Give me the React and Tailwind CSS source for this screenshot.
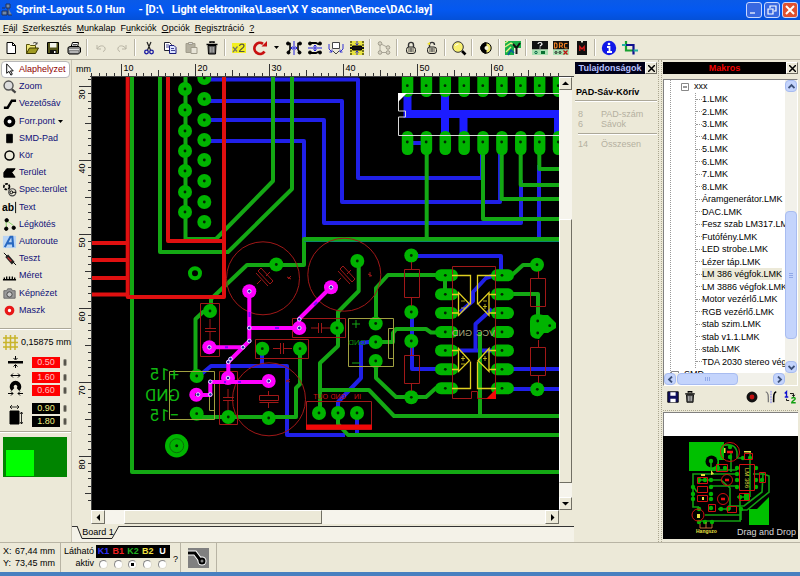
import { useEffect, useState } from 'react';
import clsx from 'clsx';

const GREEN = '#14a814';
const PAD = '#00b400';
const BLUE = '#2020e8';
const RED = '#e01010';
const PINK = '#ff00ff';
const SILK = '#a01818';
const YELLOW = '#e0d020';

/* ---------- toolbar icons ---------- */

const Svg = ({ children, size = 16 }) => (
  <svg width={size} height={size} viewBox="0 0 16 16" fill="none" stroke="#000" className="shrink-0">
    {children}
  </svg>
);

const NewIcon = () => <Svg><path d="M4 2.5h5.5l3 3v8H4z" fill="#fff" /><path d="M9.5 2.5v3h3" /></Svg>;
const OpenIcon = () => (
  <Svg>
    <path d="M2.5 13.5v-9h3l1 1h5v2.5" fill="#f0e878" stroke="#55500a" />
    <path d="M2.5 13.5l3-5.5h9l-3 5.5z" fill="#a09a20" stroke="#3c3800" />
    <path d="M9 3.5c1-1.500 3-1.500 4 .5m0-2v2.200h-2" stroke="#333" strokeWidth=".8" />
  </Svg>
);
const SaveIcon = () => (
  <Svg>
    <path d="M2.5 2.5h11v11h-11z" fill="#55551a" />
    <path d="M5 3h6.500v4.500H5z" fill="#f4f4ec" stroke="none" />
    <path d="M5 10h6.500v3.500H5z" fill="#111" stroke="none" />
    <path d="M9 11h1.500v2H9z" fill="#fff" stroke="none" />
  </Svg>
);
const PrintIcon = () => (
  <Svg>
    <path d="M5 7l1.500-4.500h6L11.500 7" fill="#fff" />
    <path d="M2 7.500l2-1h9l1.500 1.500v4l-2 2H3l-1-1.500z" fill="#888" />
    <path d="M3 9.500h10M4 12h8" stroke="#ddd" />
    <path d="M7 4.500h4M6.500 6h4" strokeWidth=".7" />
  </Svg>
);
const UndoIcon = () => <Svg><path d="M4 5v4h4M4 9c2-4 7-4 8-1 .5 2-.5 3-2 3.500" stroke="#b8b4a4" /></Svg>;
const RedoIcon = () => <Svg><path d="M12 5v4H8M12 9C10 5 5 5 4 8c-.5 2 .5 3 2 3.500" stroke="#b8b4a4" /></Svg>;
const CutIcon = () => (
  <Svg>
    <path d="M6 2l3.500 8M10 2L6.500 10" stroke="#222" strokeWidth="1.200" />
    <circle cx="5.500" cy="12" r="1.800" stroke="#1818a0" strokeWidth="1.300" />
    <circle cx="10.500" cy="12" r="1.800" stroke="#1818a0" strokeWidth="1.300" />
  </Svg>
);
const CopyIcon = () => (
  <Svg>
    <path d="M2.500 2.500h5l2 2v6h-7z" fill="#fff" stroke="#223" />
    <path d="M7.500 5.500h4.500l2 2v6H7.500z" fill="#dce4ff" stroke="#18187a" />
    <path d="M4 5h3M4 7h3M9 8.500h3M9 10.500h4" stroke="#18187a" strokeWidth=".8" />
  </Svg>
);
const PasteIcon = () => (
  <Svg>
    <path d="M3 3.500h9v9H3z" fill="#b4b0a0" stroke="#a09c8c" />
    <path d="M5.500 2.500h4v2h-4z" fill="#ddd" stroke="#a09c8c" />
    <path d="M8 7.500h6v6H8z" fill="#e8e5d8" stroke="#a09c8c" />
  </Svg>
);
const TrashIcon = ({ size }) => (
  <Svg size={size}>
    <path d="M4 5.500h8l-.5 8.500h-7z" fill="#555" />
    <path d="M2.500 4.500h11M6 3V2h4v1" strokeWidth="1.500" />
    <path d="M6.300 7v5.500M8 7v5.500M9.700 7v5.500" stroke="#ccc" strokeWidth=".8" />
  </Svg>
);
const TimesTwoIcon = () => (
  <Svg>
    <path d="M1 3h14v10H1z" fill="#f4f020" stroke="none" />
    <path d="M2 7l4 4.500M6.500 6.500L2 12" stroke="#776" strokeWidth="1.200" />
    <path d="M8.500 6c.5-2.500 4.500-2.500 4.500 0 0 2-4.500 3.500-4.500 5.500h5" stroke="#554" strokeWidth="1.200" />
  </Svg>
);
const RotateIcon = () => (
  <Svg>
    <path d="M12.500 11.500A5.500 5.500 0 1 1 11 3.800" stroke="#c81010" strokeWidth="2.800" />
    <path d="M9.500 6.500h5.500V1z" fill="#c81010" stroke="none" />
  </Svg>
);
const MirrorHIcon = () => (
  <Svg>
    <path d="M1.500 3.500h2.500v6l-1.500 3M14.500 3.500h-2.500v6l1.500 3" strokeWidth="1.600" />
    <circle cx="2" cy="3.500" r="1.500" fill="#000" /><circle cx="14" cy="3.500" r="1.500" fill="#000" />
    <circle cx="2.500" cy="12.500" r="1.500" fill="#000" /><circle cx="13.500" cy="12.500" r="1.500" fill="#000" />
    <path d="M8 1v14M5 8h6M6.500 6.500L5 8l1.500 1.500M9.500 6.500L11 8 9.500 9.500" stroke="#2020e0" />
  </Svg>
);
const MirrorVIcon = () => (
  <Svg>
    <path d="M3 3h6l3 1.500M3 13h6l3-1.500" strokeWidth="1.800" />
    <circle cx="3" cy="3.500" r="1.500" fill="#000" /><circle cx="3" cy="12.500" r="1.500" fill="#000" />
    <circle cx="13" cy="3.500" r="1.500" fill="#000" /><circle cx="13" cy="12.500" r="1.500" fill="#000" />
    <path d="M1 8h14M8 5v6M6.500 6.500L8 5l1.500 1.500M6.500 9.500L8 11l1.500-1.500" stroke="#2020e0" />
  </Svg>
);
const TurnIcon = () => (
  <Svg>
    <path d="M4.500 2.500h7v6h-7z" fill="#fff" stroke="#444" />
    <path d="M1 4v5l3 3M4 9.500V12H1.500M15 4v5l-3 3M12 9.500V12h2.500" stroke="#3030d0" />
    <path d="M5 11l3 3 3-3" stroke="#444" />
  </Svg>
);
const AlignIcon = () => (
  <Svg>
    <path d="M1 1h14v14H1z" fill="#e8e440" stroke="none" />
    <path d="M2 1v14M14 1v14" strokeDasharray="2 1" />
    <path d="M3.500 6h9v4h-9z" fill="#111" />
    <path d="M1 8h14" stroke="#111" strokeWidth="2" />
    <path d="M8 1v4M6.500 3.500L8 5l1.500-1.500M8 15v-4M6.500 12.500L8 11l1.500 1.500" stroke="#3030c0" />
  </Svg>
);
const NodesIcon = () => (
  <Svg>
    <path d="M4 3.500v9h8M4 3.500l8 4" stroke="#aaa698" />
    <circle cx="4" cy="3.500" r="1.800" fill="#d8d4c4" stroke="#a09c8c" />
    <circle cx="4" cy="12.500" r="1.800" fill="#d8d4c4" stroke="#a09c8c" />
    <circle cx="12" cy="7.500" r="1.800" fill="#d8d4c4" stroke="#a09c8c" />
    <circle cx="12" cy="12.500" r="1.800" fill="#d8d4c4" stroke="#a09c8c" />
  </Svg>
);
const LockIcon = ({ open }) => (
  <Svg>
    <path d={open ? 'M5.500 7V5c0-3.500 5-3.500 5 0' : 'M5.500 7V5c0-3.500 5-3.500 5 0v2'} stroke="#333" strokeWidth="1.400" />
    {open && <path d="M3 4l3-2v3z" fill="#f0e020" stroke="none" />}
    <rect x="3.500" y="7" width="9" height="6.500" rx="2.500" fill="#ddd8c0" stroke="#222" />
    <path d="M5 9h6M5 11h6M8 8v4" stroke="#444" strokeWidth=".8" />
  </Svg>
);
const FindIcon = () => (
  <Svg>
    <circle cx="7" cy="7" r="5.300" fill="#f8f070" stroke="#333" />
    <path d="M4.500 6a3 3 0 0 1 3-2" stroke="#fff" />
    <path d="M11 11l3.500 3.500" strokeWidth="2.600" />
  </Svg>
);
const ContrastIcon = () => (
  <Svg>
    <circle cx="8" cy="8" r="5.200" fill="#f0e870" />
    <path d="M8 2.800a5.200 5.200 0 0 0 0 10.400z" fill="#000" />
    <circle cx="8.500" cy="8" r="2" fill="#f4f4dc" stroke="none" />
  </Svg>
);
const PhotoViewIcon = () => (
  <Svg>
    <path d="M0 1h16v14H0z" fill="#18b048" stroke="none" />
    <path d="M0 7l6-4 4 3M1 12l5-5M0 3l3-2" stroke="#e8f080" strokeWidth="1.400" />
    <path d="M9 15V8h7v7z" fill="#ece9d8" stroke="none" />
    <path d="M3 15l3-5 3 3" stroke="#0a5a9a" strokeWidth="1.500" />
    <path d="M8 4l3.500 4v6M15 3l-3.500 5" stroke="#111" strokeWidth="2" />
  </Svg>
);
const BoardPanel = ({ children }) => (
  <Svg>
    <path d="M0 1h16v8.500H0z" fill="#111" stroke="none" />
    <path d="M0 9.500h16V15H0z" fill="#a8e0b0" stroke="none" />
    {children}
  </Svg>
);
const HelpBoardIcon = () => (
  <BoardPanel>
    <path d="M6 4c0-2 4-2 4 0 0 1.300-2 1.200-2 2.500M8 7.500v1" stroke="#fff" strokeWidth="1.200" />
    <circle cx="4" cy="12.500" r="1.200" stroke="#064" /><path d="M9 11h4v3H9z" fill="#087030" stroke="none" />
  </BoardPanel>
);
const DrcIcon = () => (
  <BoardPanel>
    <path d="M1.500 3v5h1.500l1-1V4L3 3zM6.500 8V3h2l1 1v1l-1 1h-2M8.500 6l1 2M14.500 3.500h-2.500l-.5 1v2.500l.5 1h2.500" stroke="#f08020" strokeWidth="1.100" />
    <circle cx="3" cy="12.500" r="1" stroke="#222" /><circle cx="7" cy="12.500" r="1" stroke="#222" />
    <path d="M10.500 10.500l4 4M14.500 10.500l-4 4" stroke="#c01010" strokeWidth="1.300" />
  </BoardPanel>
);
const MacroIcon = () => (
  <Svg>
    <path d="M3 1h4v1.500h2V1h4v14H3z" fill="#111" stroke="none" />
    <path d="M5.800 11V6.500L8 9l2.200-2.500V11" stroke="#e01818" strokeWidth="1.200" />
  </Svg>
);
const InfoIcon = () => (
  <Svg>
    <circle cx="8" cy="8" r="7.200" fill="#1018e8" stroke="none" />
    <path d="M6 7h2.500v4.500M6 12h5" stroke="#fff" strokeWidth="1.800" /><circle cx="8" cy="4" r="1.300" fill="#fff" stroke="none" />
  </Svg>
);
const CropIcon = () => (
  <Svg>
    <path d="M4 1v9.500h7.500" stroke="#18a030" strokeWidth="2.200" />
    <path d="M4 5h7.500v9.500" stroke="#101090" strokeWidth="2.200" />
    <path d="M0 5h4M11.500 10.500H16" stroke="#20b0a0" strokeWidth="2.200" />
  </Svg>
);

const TOOLBAR = [
  [['New', NewIcon], ['Open', OpenIcon], ['Save', SaveIcon], ['Print', PrintIcon]],
  [['Undo', UndoIcon], ['Redo', RedoIcon]],
  [['Cut', CutIcon], ['Copy', CopyIcon], ['Paste', PasteIcon], ['Delete', TrashIcon]],
  [['Duplicate', TimesTwoIcon], ['Rotate', RotateIcon, true], ['Mirror horizontal', MirrorHIcon], ['Mirror vertical', MirrorVIcon], ['Turn', TurnIcon], ['Align', AlignIcon]],
  [['Group', NodesIcon]],
  [['Lock', LockIcon], ['Unlock', () => <LockIcon open />]],
  [['Find', FindIcon]],
  [['Contrast', ContrastIcon]],
  [['Photo view', PhotoViewIcon]],
  [['Board help', HelpBoardIcon], ['DRC', DrcIcon], ['Macros', MacroIcon]],
  [['Info', InfoIcon], ['Crop', CropIcon]],
];

/* ---------- sidebar tools ---------- */

const TOOLS = [
  { name: 'Alaphelyzet', icon: <path d="M5 2v10l2.500-2 2 4 1.500-1-2-3.500h3z" fill="#fff" /> },
  { name: 'Zoom', icon: <><circle cx="7" cy="7" r="4.800" fill="#dcdcdc" stroke="#555" strokeWidth="1.500" /><path d="M10.500 11l4 3.500" stroke="#444" strokeWidth="2.400" /></> },
  { name: 'Vezetősáv', icon: <path d="M2 12.500h4l4.500-7.500H15" strokeWidth="2.600" /> },
  { name: 'Forr.pont', arrow: true, icon: <circle cx="8" cy="8" r="4.200" strokeWidth="4" fill="#fff" /> },
  { name: 'SMD-Pad', icon: <path d="M5 3.500h6v9H5z" fill="#000" /> },
  { name: 'Kör', icon: <circle cx="8" cy="8" r="4.800" strokeWidth="1.600" /> },
  { name: 'Terület', icon: <path d="M5 4h9l-3.500 4 3.500 5H2V8z" fill="#000" /> },
  { name: 'Spec.terület', icon: <><circle cx="5" cy="5" r="3" strokeWidth="1.800" strokeDasharray="3 1" /><circle cx="11" cy="11" r="3.800" stroke="#444" strokeWidth="1.300" /><circle cx="10" cy="11" r="1.500" /><path d="M11 11h4" /></> },
  { name: 'Text', icon: <><text x="0" y="12" fill="#000" stroke="none" className="text-[11px] font-bold">ab</text><path d="M14.500 2v12" /></> },
  { name: 'Légkötés', icon: <><path d="M4 3l1 10M4 3l8 6" stroke="#80d060" /><circle cx="5" cy="3.500" r="1.800" fill="#000" /><circle cx="4.500" cy="12.500" r="1.800" fill="#000" /><circle cx="12.500" cy="11.500" r="1.800" fill="#000" /></> },
  { name: 'Autoroute', icon: <><path d="M1 2h14v13H1z" fill="#b8d4f4" stroke="none" /><path d="M3 14l6-11h2l1 11M6 10h6" stroke="#2868c0" strokeWidth="2.200" /></> },
  { name: 'Teszt', icon: <><path d="M2 2l4 4" /><path d="M5 5l7 8" stroke="#222" strokeWidth="4" /><path d="M6 7l4 4" stroke="#c03030" strokeWidth="1.500" /><path d="M12 12l3 3" /></> },
  { name: 'Méret', icon: <path d="M1 12.500h14M2.500 12v-2m2.500 2v-3m3 3V9m3 3v-3m2.500 3v-2" strokeWidth="1.400" /> },
  { name: 'Képnézet', icon: <><path d="M2 5h3l1-2h4l1 2h3v8H2z" fill="#999" stroke="#666" /><circle cx="8" cy="9" r="2.800" fill="#ccc" stroke="#444" /></> },
  { name: 'Maszk', icon: <circle cx="8" cy="8" r="3.500" stroke="#e81818" strokeWidth="3.400" fill="#fff" /> },
];

const Separator = () => <div className="h-px bg-[#aca899] border-b border-white box-content" />;

const SizeInput = ({ label, value, dark }) => (
  <div className="flex items-center gap-[3px]">
    <input
      aria-label={label}
      defaultValue={value}
      className={clsx(
        'w-[28px] h-[11px] text-[9px] leading-[11px] text-center outline-none',
        dark ? 'bg-black text-[#f4f080]' : 'bg-[#ff0000] text-[#ffc0c0]'
      )}
    />
    <span className="w-1 h-[7px] rounded-sm bg-[#55534a] border-x border-[#a8a598]" />
  </div>
);

const Sidebar = ({ tool, setTool }) => (
  <aside className="w-[72px] shrink-0 border-r border-[#c8c4b4] pt-px">
    <div className="grid auto-rows-fr h-[258px] px-px">
      {TOOLS.map((t) => (
        <button
          key={t.name}
          onClick={() => setTool(t.name)}
          className={clsx(
            'flex items-center gap-[2px] rounded-sm border text-[9px] leading-[11px] whitespace-nowrap',
            tool === t.name ? 'bg-white border-[#b8b8b8] text-[#900000]' : 'border-transparent text-[#101078]'
          )}
        >
          <Svg size={15}>{t.icon}</Svg>
          {t.name}
          {t.arrow && <svg width="5" height="3" className="ml-px"><path d="M0 0h5L2.500 3z" /></svg>}
        </button>
      ))}
    </div>
    <div className="mt-[9px]"><Separator /></div>
    <div className="flex items-center gap-[3px] mt-1 pl-[3px] text-[9px] leading-4 whitespace-nowrap">
      <svg width="15" height="15" stroke="#c8b428" strokeWidth="1.500"><path d="M3 0v15M7.500 0v15M12 0v15M0 3h15M0 7.500h15M0 12h15" /></svg>
      0,15875 mm
    </div>
    <div className="flex items-center gap-[9px] mt-[6px] pl-2">
      <svg width="15" height="12"><path d="M0 5h15v2.500H0z" /><path d="M7.500 0v3M7.500 12V9M5.500 2l2 2 2-2M5.500 10.500l2-2 2 2" fill="none" stroke="#000" /></svg>
      <SizeInput label="Track width" value="0.50" />
    </div>
    <div className="flex items-center gap-[9px] mt-1 pl-2">
      <svg width="15" height="23" fill="none" stroke="#000">
        <path d="M3 2.500h9M5 .5l-2 2 2 2M10 .5l2 2-2 2" />
        <path d="M5 16.500A3.800 3.800 0 1 1 10 16.500" strokeWidth="4" />
        <path d="M0 20.500h5M15 20.500h-5M3 18.500l2 2-2 2M12 18.500l-2 2 2 2" />
      </svg>
      <div className="flex flex-col gap-[2px]">
        <SizeInput label="Pad outer" value="1.60" />
        <SizeInput label="Pad inner" value="0.60" />
      </div>
    </div>
    <div className="flex items-center gap-[9px] mt-[7px] mb-1 pl-2">
      <svg width="15" height="23" stroke="#000" fill="none">
        <path d="M2 7h9v13H2z" fill="#000" />
        <path d="M2 3h9M4 1L2 3l2 2M9 1l2 2-2 2M13.500 8v12M12 10l1.500-2 1.500 2M12 18l1.500 2 1.500-2" strokeWidth=".8" />
      </svg>
      <div className="flex flex-col gap-[2px]">
        <SizeInput label="SMD width" value="0.90" dark />
        <SizeInput label="SMD height" value="1.80" dark />
      </div>
    </div>
    <Separator />
    <div className="mt-1 ml-[3px] mr-1 h-[40px] bg-[#008400] pt-[13px] pl-[3px]">
      <div className="w-[28px] h-[26px] bg-[#00ff00]" />
    </div>
  </aside>
);

/* ---------- rulers ---------- */

const PX_PER_MM = 7.4;
const tick = (mm, long, mid, short) => (mm % 10 === 0 ? long : mm % 5 === 0 ? mid : short);
const range = (from, to) => Array.from({ length: Math.max(0, to - from + 1) }, (_, i) => from + i);

// how many mm are on screen depends on the window
const useVisibleMm = () => {
  const measure = () => ({
    right: Math.floor((window.innerWidth - 235 - 122) / PX_PER_MM) + 10,
    bottom: Math.floor((window.innerHeight - 68 - 87) / PX_PER_MM) + 30,
  });
  const [mm, setMm] = useState(measure);

  useEffect(() => {
    const onResize = () => setMm(measure());
    window.addEventListener('resize', onResize);
    return () => window.removeEventListener('resize', onResize);
  }, []);

  return mm;
};

const TopRuler = ({ last }) => (
  <svg className="block w-full h-[17px]">
    <g transform="translate(-73 -60)">
      <text x="77" y="72" className="text-[9px]">mm</text>
      <path d="M91 76.500H3000" stroke="#444" />
      {range(6, last).map((mm) => {
        const x = Math.round(122 + (mm - 10) * PX_PER_MM) + 0.5;
        return (
          <g key={mm}>
            <path d={`M${x} 76V${tick(mm, 64, 70, 73)}`} stroke="#333" />
            {mm % 10 === 0 && mm < last - 1 && <text x={x + 2} y="71" className="text-[9px]">{mm}</text>}
          </g>
        );
      })}
    </g>
  </svg>
);

const LeftRuler = ({ last }) => (
  <svg className="block w-[19px] shrink-0 self-stretch h-auto">
    <g transform="translate(-73 -77)">
      <path d="M91.500 77V3000" stroke="#444" />
      {range(29, last).map((mm) => {
        const y = Math.round(86 + (mm - 30) * PX_PER_MM) + 0.5;
        return (
          <g key={mm}>
            <path d={`M91 ${y}H${tick(mm, 79, 85, 88)}`} stroke="#333" />
            {mm % 10 === 0 && (
              <text transform={`translate(85 ${y + 13}) rotate(-90)`} className="text-[9px]">{mm}</text>
            )}
          </g>
        );
      })}
    </g>
  </svg>
);

/* ---------- board ---------- */

const BLUE_TRACKS = [
  '208,79.5 358,79.5 358,178 482,178 482,150',
  '208,101 342,101 342,202 500,202 500,150',
  '208,120 324,120 324,223 521,223 521,180',
  '208,141 304,141 304,239',
  '539,165 539,238',
  '412,143 421,143',
  '199,376 211,366 287,366 287,435 345,435',
  '262,349 262,366',
  '411,256 501,256 501,275',
  '412,312 412,369 445,369',
  '376,341 361,343 361,378 338,402 338,413',
  '357,413 357,434',
  '495,275 486,278 473,292 473,301 460,312',
  '492,309 475.5,324 475.5,350',
  '460,350.5 495,350.5',
  '502,369 2000,369',
  '502,389 2000,389',
];

const GREEN_TRACKS = [
  '132,70 132,472 2000,472',
  '160,70 160,252 228,252 292,189 292,70',
  '185.5,70 185.5,239 216,239 273,181 273,70',
  '2000,239 304,239 304,265 247,265 211,299 211,311',
  '426.7,150 426.7,239',
  '483,150 483,219 2000,219',
  '501.7,150 501.7,199 2000,199',
  '520.7,150 520.7,185 2000,185',
  '539.3,150 539.3,169 2000,169',
  '208,311 203,312 195.5,319 195.5,376',
  '300,349 300,384 296,388 296,417 197,417',
  '358.7,262 358.7,291 338,312 338,346 320,363 320,413',
  '376,323 376,288 388,275 445,275 445,294',
  '376,342 393,342 393,333 396,329 426,329 431,332.5 445,332.5',
  '376,361 376,378 396,397 426,397 436,388 445,388',
  '320,390 369,390 394,416 2000,416',
  '338,413 338,424 348,435 2000,435',
  '480,332 480,416',
  '512,275 523,265 537,265',
  '502,294 538,294 538,320',
];

const RED_TRACKS = [
  '127.7,70 127.7,297 224,297 224,70',
  '168,70 168,241 224,241',
  '92,243 128,243',
  '92,260 128,260',
  '92,278 128,278',
  '92,294.5 128,294.5',
];

const PINK_TRACKS = [
  '249.3,291 249.3,341 228.3,362 228.3,378',
  '249,328 299,328 299,319 331,287',
  '209,347.3 243,347.3',
  '196,395 210.3,395 210.3,382 269,382',
];

const PADS = [
  ...[89, 110, 131, 151, 171, 192, 212].map((y) => [185, y]),
  ...[78, 99, 120, 140, 160, 181, 202, 222].map((y) => [204.3, y]),
  [276.3, 264.5], [210, 311], [262.3, 348.7], [300, 348.7], [196.7, 376], [196.7, 413.7],
  [228.3, 417], [268.7, 418], [319, 413], [338, 413], [357, 413], [357.3, 261], [337, 328],
  [375.7, 323.5], [375.7, 342], [375.7, 361], [411.3, 255.5], [411.3, 312], [411.3, 341],
  [411.3, 397.3], [537, 264.7], [537.3, 389.3],
];

const PINK_PADS = [[249.3, 291.3], [209.3, 347.3], [299.3, 328], [331, 287.3], [196.3, 394.7], [228, 378], [268.7, 381]];
const PINK_VIAS = [[299.3, 319.3], [249.3, 328], [249.3, 341], [243, 347.3], [230.5, 359], [228.3, 362], [210.3, 381.7], [210.3, 394.5], [198, 394.5], [249.3, 291.3], [209.3, 347.3], [299.3, 328], [331, 287.3], [228, 378], [268.7, 381]];

const DIP_X = Array.from({ length: 9 }, (_, i) => 407.3 + i * 18.87);
const DIP_Y = [275.3, 294.3, 313, 332, 350.5, 369.3, 388.3];

const Tracks = ({ list, color, width = 4 }) => (
  <g fill="none" stroke={color} strokeWidth={width} strokeLinejoin="round">
    {list.map((points) => <polyline key={points} points={points} />)}
  </g>
);

const Pad = ({ x, y, color = PAD }) => (
  <g>
    <circle cx={x} cy={y} r="7" fill={color} />
    <circle cx={x} cy={y} r="1.400" fill="#002800" />
  </g>
);

// copper side text is seen through the board, so it reads right to left
const Mirrored = ({ x, y, fill, className, children }) => (
  <text transform={`translate(${x} ${y}) scale(-1 1)`} fill={fill} className={className}>{children}</text>
);

const Board = () => (
  <svg className="block absolute inset-0 w-full h-full">
    <g transform="translate(-92 -77)">
      <Tracks list={BLUE_TRACKS} color={BLUE} />
      <g fill="none" stroke="#1c1cff" strokeWidth="8">
        <path d="M407.500 92v26M403.500 114H2000M445 92v42M463.500 114v20M558 114v20" />
      </g>
      <Tracks list={GREEN_TRACKS} color={GREEN} />
      <path d="M304 241.500H2000" stroke="#0a8a6a" />
      <Tracks list={RED_TRACKS} color={RED} />

      {DIP_X.map((x) => (
        <g key={x}>
          <rect x={x - 5.5} y="70" width="11.500" height="27" rx="5.500" fill={PAD} />
          <rect x={x - 5.5} y="131" width="11.500" height="24" rx="5.500" fill={PAD} />
          <circle cx={x} cy="85.700" r="1.400" fill="#002800" />
          <circle cx={x} cy="142" r="1.400" fill="#002800" />
        </g>
      ))}
      <path d="M2000 93.500H398.500V111H405.500V117H398.500V135.500H2000" fill="none" stroke="#d8d8d8" />
      <path d="M398 93h9l-9 9z" fill="#fff" />

      {PADS.map(([x, y]) => <Pad key={`${x}-${y}`} x={x} y={y} />)}
      <circle cx="195" cy="273.300" r="5" fill="none" stroke={PAD} strokeWidth="4" />
      <circle cx="176.700" cy="445.700" r="11.700" fill={PAD} />
      <circle cx="176.700" cy="445.700" r="7" fill="none" stroke="#087008" />
      <circle cx="176.700" cy="445.700" r="1.500" fill="#002800" />

      {DIP_Y.map((y) => (
        <g key={y} fill={PAD}>
          <rect x="435" y={y - 6} width="23" height="12" rx="6" />
          <rect x="491" y={y - 6} width="23" height="12" rx="6" />
          <circle cx="445.300" cy={y} r="1.400" fill="#002800" />
          <circle cx="502" cy={y} r="1.400" fill="#002800" />
        </g>
      ))}
      <path d="M530 321q0-7 8-7l5 1h5l8 8v5l-8 5h-4l-5 6q-9 0-9-8z" fill={PAD} />
      <g fill="#002800"><circle cx="537.700" cy="321" r="1.400" /><circle cx="549.700" cy="325.700" r="1.400" /><circle cx="537.700" cy="333" r="1.400" /></g>

      {/* component outlines */}
      <g fill="none" stroke={SILK}>
        <circle cx="263" cy="278.300" r="36.500" />
        <circle cx="344.300" cy="274.700" r="36.500" />
        <circle cx="269" cy="399.300" r="36.500" />
        <path d="M200.500 303.500h19v53h-19zM292.500 318.500h53v19h-53zM255.500 339.500h53v19h-53zM219.500 371.500h18v53h-18z" />
        <path d="M210 319v9M205 328.500h11M205 331.500h11M210 332v8" />
        <path d="M311 328h7M318.500 323v10M321.500 323v10M322 328h8" />
        <path d="M273 348.500h7M280.500 343v11M283.500 343v11M284 348.500h8" />
        <path d="M228 389v8M223 397.500h11M223 400.500h11M228 401v9" />
        <path d="M259.500 395.500h19v5h-19zM259.500 402.500h19M268.500 391v5M268.500 403v5" />
        <path d="M258 271l3-3 12 13-3 3zM256 273l12 13M257 284l4-4M266 276l4-4M287 277l4 2M288 279l3-3" />
        <path d="M340 269l3-3 12 13-3 3zM338 271l12 13M338 281l3-3M347 274l4-4M368 274l4 2M370 272v5" />
        <path d="M286 380l4 2M286 382l4-3" />
        <path d="M404.500 269.500h15v28h-15zM411.500 262v7M411.500 298v8M404.500 355.500h15v28h-15zM411.500 348v7M411.500 384v7" />
        <path d="M530.500 278.500h15v28h-15zM538.500 271v7M530.500 347.500h15v28h-15zM538.500 340v7M538.500 376v7" />
        <path d="M452.500 266.500h43v132h-18v-7h-6v7h-19zM306.500 401.500h65v28h-65z" />
      </g>
      <path d="M306 424.500h66v5h-66zM496 389v10h-10z" fill="#f00808" />
      <g fill="none" stroke="#a0a040">
        <path d="M169.500 371.500h45v48h-45zM209.500 381.500h5v29h-5zM348.500 318.500h45v48h-45zM388.500 328.500h5v30h-5z" />
      </g>
      <g fill="none" stroke={YELLOW} strokeWidth="1.300">
        <path d="M452 275.500h18.500v29M452 294.500h7M452 313h7M458.500 292.500v23l11-11.500z" />
        <path d="M496 275.500h-18.500v29M496 294.500h-7M496 313h-7M489 292.500v23l-11-11.500z" />
        <path d="M452 388.500h18.500v-27M452 369.500h7M452 350.500h7M458.500 348.500v23l11-11z" />
        <path d="M496 388.500h-18.500v-27M496 369.500h-7M496 350.500h-7M489 348.500v23l-11-11z" />
        <path d="M461 301h4M461 308h4M483 301h4M485 304v5M483 306.500h4M461 358.500h4M463 356v5M461 364h4M483 358.500h4M485 356v5" strokeWidth=".8" />
      </g>

      {/* selected net */}
      <Tracks list={PINK_TRACKS} color={PINK} />
      {PINK_PADS.map(([x, y]) => <Pad key={`${x}-${y}`} x={x} y={y} color={PINK} />)}
      {PINK_VIAS.map(([x, y]) => (
        <circle key={`${x}-${y}`} cx={x} cy={y} r="1.800" fill="#2020a0" stroke="#e8e0ff" />
      ))}
      <path d="M249.500 312v5M275 328h4M226 382h-2M314 305l3-3M225 347.300h3M238 382h3" stroke="#8000ff" strokeWidth="2" />

      <Mirrored x={179} y={380} fill="#10b810" className="font-[Roboto,sans-serif] text-[17px]">+15</Mirrored>
      <Mirrored x={180} y={401} fill="#10b810" className="font-[Roboto,sans-serif] text-[17px]">GND</Mirrored>
      <Mirrored x={179} y={421} fill="#10b810" className="font-[Roboto,sans-serif] text-[17px]">−15</Mirrored>
      <path d="M352 324h8M356 320v8M352 363h8" stroke={GREEN} />
      <Mirrored x={366} y={345} fill="#0c900c" className="text-[8px]">GND</Mirrored>
      <Mirrored x={472} y={336} fill="#b0b080" className="text-[9px]">GND</Mirrored>
      <Mirrored x={495} y={336} fill="#b0b080" className="text-[9px]">VCC</Mirrored>
      <Mirrored x={328} y={399} fill="#d01010" className="text-[7px]">OUT</Mirrored>
      <Mirrored x={346} y={399} fill="#d01010" className="text-[7px]">GND</Mirrored>
      <Mirrored x={361} y={399} fill="#d01010" className="text-[7px]">IN</Mirrored>
    </g>
  </svg>
);

const ClassicButton = ({ label, d, className }) => (
  <button aria-label={label} className={clsx('flex items-center justify-center shrink-0 bg-[#ece9d8] border border-white border-r-[#716f64] border-b-[#716f64]', className)}>
    <svg width="7" height="7"><path d={d} /></svg>
  </button>
);

const Editor = () => {
  const visible = useVisibleMm();

  return (
    <main className="flex-1 min-w-0 flex flex-col">
      <TopRuler last={visible.right} />
      <div className="flex-1 flex pl-px pr-[2px]">
        <LeftRuler last={visible.bottom} />
        <div className="relative flex-1 min-w-0 bg-black overflow-hidden"><Board /></div>
        <div className="w-[13px] flex flex-col bg-[#f6f4ec]">
          <ClassicButton label="Scroll up" d="M0 5h7L3.500 1.500z" className="h-[13px]" />
          <div className="flex-[130_1_0%]" />
          <div className="flex-[263_1_0%] bg-[#ece9d8] border border-white border-r-[#716f64] border-b-[#716f64]" />
          <div className="flex-[14_1_0%]" />
          <ClassicButton label="Scroll down" d="M0 2h7L3.500 5.500z" className="h-[13px]" />
        </div>
      </div>
      <div className="flex ml-[19px] mr-[15px] h-[14px] bg-[#f6f4ec]">
        <ClassicButton label="Scroll left" d="M5 0v7L1.500 3.500z" className="w-[14px]" />
        <div className="flex-[19_1_0%]" />
        <div className="flex-[197_1_0%] bg-[#ece9d8] border border-white border-r-[#716f64] border-b-[#716f64]" />
        <div className="flex-[224_1_0%]" />
        <ClassicButton label="Scroll right" d="M2 0v7l3.500-3.500z" className="w-[14px]" />
      </div>
      <div className="flex mt-[2px] h-4 bg-[#f4f2e8]">
        <div className="w-[5px] border-t border-[#333]" />
        <button className="relative w-[42px] h-[13px] text-[9px] leading-[13px] whitespace-nowrap">
          <svg className="absolute inset-0 w-full h-full" fill="#ece9d8" stroke="#222"><path d="M0 0l5 12.500h30L42 0" /></svg>
          <span className="relative">Board 1</span>
        </button>
        <div className="flex-1 border-t border-[#333]" />
      </div>
    </main>
  );
};

/* ---------- right panels ---------- */

const CloseButton = () => (
  <button aria-label="Close" className="w-3 shrink-0 flex items-center justify-center bg-[#ece9d8] border border-white border-r-[#716f64] border-b-[#716f64]">
    <svg width="7" height="7" stroke="#000" strokeWidth="1.500"><path d="M0 0l7 7M7 0L0 7" /></svg>
  </button>
);

const Properties = () => (
  <section className="w-[83px] shrink-0 pt-[2px] pl-px">
    <div className="flex h-[12px]">
      <h2 className="flex-1 bg-[#000018] text-[#b8c0ff] text-[9px] leading-3 font-bold text-center">Tulajdonságok</h2>
      <CloseButton />
    </div>
    <h3 className="mt-3 pl-px text-[9px] leading-3 font-bold whitespace-nowrap">PAD-Sáv-Körív</h3>
    <div className="mt-[2px] mb-[7px]"><Separator /></div>
    <dl className="grid grid-cols-[23px_1fr] gap-x-0 pl-[3px] text-[9px] leading-[10px] text-[#b4b0a0]">
      <dt>8</dt><dd>PAD-szám</dd>
      <dt>6</dt><dd>Sávok</dd>
      <div className="col-span-2 my-1"><Separator /></div>
      <dt>14</dt><dd>Összesen</dd>
    </dl>
  </section>
);

const MACROS = [
  '1.LMK', '2.LMK', '3.LMK', '4.LMK', '5.LMK', '6.LMK', '7.LMK', '8.LMK',
  'Áramgenerátor.LMK', 'DAC.LMK', 'Fesz szab LM317.LMK', 'Futófény.LMK', 'LED strobe.LMK',
  'Lézer táp.LMK', 'LM 386 végfok.LMK', 'LM 3886 végfok.LMK', 'Motor vezérlő.LMK',
  'RGB vezérlő.LMK', 'stab szim.LMK', 'stab v1.1.LMK', 'stab.LMK', 'TDA 2030 stereo végfok.LMK',
];

const XpButton = ({ label, d }) => (
  <button aria-label={label} className="w-3 h-3 shrink-0 flex items-center justify-center rounded-sm bg-[#c4d4fc] border border-[#a8bcf0]">
    <svg width="7" height="7" fill="none" stroke="#3c5078" strokeWidth="1.800"><path d={d} /></svg>
  </button>
);

const Toggle = ({ open }) => (
  <svg width="8" height="8" fill="#fff" stroke="#888" className="shrink-0">
    <path d="M.5.5h7v7h-7z" />
    <path d={open ? 'M2 4h4' : 'M2 4h4M4 2v4'} stroke="#333" />
  </svg>
);

const MacroTree = () => {
  const [selected, setSelected] = useState('LM 386 végfok.LMK');

  return (
    <div className="flex bg-white border border-[#808080] border-r-white border-b-white">
      <div className="flex-1 min-w-0">
        <div className="ml-[6px] border-l border-dotted border-[#999] h-[293px] overflow-hidden text-[9px]">
          <div className="flex items-center gap-[5px] h-[13px] pl-[10px] leading-[13px]"><Toggle open />xxx</div>
          <ul className="grid auto-rows-fr h-[275px] ml-[24px] border-l border-dotted border-[#999]">
            {MACROS.map((name) => (
              <li key={name} className="flex items-center min-w-0">
                <span className="w-[6px] shrink-0 border-t border-dotted border-[#999]" />
                <button
                  onClick={() => setSelected(name)}
                  className={clsx('leading-3 whitespace-nowrap', selected === name && 'bg-[#ece9d8]')}
                >
                  {name}
                </button>
              </li>
            ))}
          </ul>
          <div className="flex items-center gap-[5px] leading-[13px]"><Toggle />SMD</div>
        </div>
        <div className="flex bg-[#f2f1ea]">
          <XpButton label="Scroll left" d="M5 .5l-3 3 3 3" />
          <div className="w-px" />
          <div className="flex-[58_1_0%] flex items-center justify-center gap-px rounded-sm bg-[#c4d4fc] border border-[#a8bcf0]">
            {[1, 2, 3].map((n) => <span key={n} className="w-px h-1 bg-[#90a8e8]" />)}
          </div>
          <div className="flex-[34_1_0%]" />
          <XpButton label="Scroll right" d="M2 .5l3 3-3 3" />
        </div>
      </div>
      <div className="w-3 flex flex-col bg-[#f2f1ea]">
        <XpButton label="Scroll up" d="M.5 5l3-3 3 3" />
        <div className="flex-[119_1_0%]" />
        <div className="flex-[125_1_0%] flex flex-col items-center justify-center gap-px rounded-sm bg-[#c4d4fc] border border-[#a8bcf0]">
          {[1, 2, 3].map((n) => <span key={n} className="h-px w-1 bg-[#90a8e8]" />)}
        </div>
        <div className="flex-[22_1_0%]" />
        <XpButton label="Scroll down" d="M.5 2l3 3 3-3" />
        <div className="h-3 bg-[#ece9d8]" />
      </div>
    </div>
  );
};

const Preview = () => (
  <svg className="block w-full h-[103px] bg-black">
    <g transform="translate(-664 -436)">
      <path d="M690 442h35v18h-5v11h-30z" fill="#00c000" />
      <circle cx="712.500" cy="461.500" r="6" fill="#000" />
      <path d="M770 497v28h-20v-16h8z" fill="#00c000" />
      <g fill="none" stroke="#12a012" strokeWidth="1.600">
        <path d="M712 461v9h26M722 446q14-4 16 6v6h8M751 452v45M738 474h-44v12l4 6M694 487v20h6M712 480h10l9 8v21h-12M770 480v12l-22 18h-7v11h-28M764 474h-10M764 474l-1 18-18 14h-16M770 492v-16l-8-3M700 484v-4h14M738 486h-26M738 497h10M706 515h35v-20M700 521h42M732 452v20M742 509v11" />
      </g>
      <g fill="#00b400">
        {[[712, 461], [731, 447], [731, 457], [744, 458], [751, 458], [719, 468], [726, 468], [738, 468], [738, 474], [738, 480], [738, 487], [757, 468], [757, 480], [757, 487], [694, 487], [694, 494], [694, 499], [700, 480], [706, 480], [712, 480], [712, 487], [712, 494], [712, 499], [712, 508], [722, 509], [729, 509], [742, 509], [741, 497], [700, 522], [706, 522], [713, 522], [700, 509], [763, 480]].map(([x, y]) => (
          <circle key={`${x}-${y}`} cx={x} cy={y} r="2.200" />
        ))}
        <rect x="745" y="494" width="6" height="6" />
      </g>
      <g fill="none" stroke="#d01010">
        <circle cx="731" cy="452" r="9.500" /><circle cx="728" cy="480" r="5.500" /><circle cx="724" cy="499" r="5.500" /><circle cx="699" cy="515" r="6" />
        <path d="M740.500 464.500h15v26h-15zM717.500 464.500h11v7h-11zM698.500 477.500h10v6h-10zM698.500 486.500h10v6h-10zM698.500 495.500h10v6h-10zM728.500 506.500h9v6h-9zM760.500 472.500h6v10h-6zM745.500 453.500h8v6h-8zM709.500 504.500h7v7h-7zM740.500 493.500h10v7h-10z" />
      </g>
      <path d="M728 452h6M726 480h4M722 499h4" stroke="#f01010" strokeWidth="2.500" />
      <g fill="#e8e040">
        <text x="697" y="533" className="text-[5px] font-bold">Hangszo</text>
        <text transform="translate(746 468) rotate(90)" className="text-[6px]">LM 386</text>
        <path d="M725 448v5h1.500v-5zM698 514h3v4h-3zM703 497h2v3h-2zM745 451h7v1.500h-7zM702 474h4v2h-4zM712 470l3 4-3 1z" />
      </g>
      <path d="M701 524v4h12v-4M707 522v6" stroke="#e88040" fill="none" strokeWidth=".8" />
      <text x="738" y="535" fill="#d8d8d8" className="text-[9px]">Drag and Drop</text>
    </g>
  </svg>
);

const IconButton = ({ label, children }) => (
  <button aria-label={label} className="w-[17px] flex items-center justify-center">{children}</button>
);

const Makros = () => (
  <section className="w-[137px] shrink-0 pt-[2px] pr-[2px]">
    <div className="flex h-[12px]">
      <h2 className="flex-1 bg-black text-[#f00000] text-[9px] leading-3 font-bold text-center">Makros</h2>
      <CloseButton />
    </div>
    <div className="mt-[5px]"><MacroTree /></div>
    <div className="flex items-center h-[22px] pl-px">
      <IconButton label="Save macro"><Svg size={14}><path d="M2 2h12v12H2z" fill="#101060" /><path d="M5 2.500h6v4H5zM5 10h6v4H5z" fill="#fff" stroke="none" /></Svg></IconButton>
      <IconButton label="Delete macro"><TrashIcon size={14} /></IconButton>
      <span className="flex-1" />
      <div className="flex gap-[2px]">
        <IconButton label="Record"><Svg size={14}><circle cx="8" cy="8" r="4.500" stroke="#111" strokeWidth="3.500" fill="#c01010" /></Svg></IconButton>
        <IconButton label="Mirror"><Svg size={14}><path d="M2 2c3 1 3 4 3 12" stroke="#777" strokeWidth="1.500" /><path d="M14 2c-3 1-3 4-3 12" strokeWidth="1.800" /><path d="M8 1v14" stroke="#66f" strokeDasharray="2 1" /></Svg></IconButton>
        <IconButton label="Swap side"><Svg size={14}><path d="M2 4l2-2v6M2 8h4" stroke="#1010d0" strokeWidth="1.600" /><path d="M10 10c0-2 4-2 4 0 0 1.500-4 2.500-4 4.500h4.500" stroke="#10a010" strokeWidth="1.600" /><path d="M8 4h4v3M10.500 5.500L12 7.500l1.500-2M7 12H4v-2" /></Svg></IconButton>
      </div>
    </div>
    <div className="mt-[2px] border-t border-dotted border-[#aaa68f] pt-px">
      <div className="h-[24px] bg-white border-t border-l border-[#808080]" />
      <Preview />
    </div>
  </section>
);

/* ---------- status bar ---------- */

const LAYERS = [
  { name: 'K1', color: 'text-[#3030f8]' },
  { name: 'B1', color: 'text-[#f02020]' },
  { name: 'K2', color: 'text-[#20b020]' },
  { name: 'B2', color: 'text-[#f0e040]' },
  { name: 'U', color: 'text-white' },
];

const StatusBar = () => {
  const [layer, setLayer] = useState('K2');

  return (
    <footer className="flex h-[30px] border-t border-[#b8b4a4] text-[9px] leading-3 whitespace-nowrap">
      <div className="w-[61px] border-r border-[#b8b4a4] pt-[2px] pl-[3px] pr-[5px]">
        <div className="flex justify-between"><span>X:</span><span>67,44 mm</span></div>
        <div className="flex justify-between"><span>Y:</span><span>73,45 mm</span></div>
      </div>
      <div className="flex w-[120px] pl-[2px] pt-[2px] border-r border-[#b8b4a4]">
        <div className="w-[33px] text-right pr-[2px]">
          <div>Látható</div>
          <div>aktiv</div>
        </div>
        <div className="w-[74px]">
          <div className="grid grid-cols-5 h-[13px] bg-black font-bold text-center">
            {LAYERS.map((l) => <span key={l.name} className={l.color}>{l.name}</span>)}
          </div>
          <div className="grid grid-cols-5 justify-items-center pt-[2px]">
            {LAYERS.map((l) => (
              <input
                key={l.name}
                type="radio"
                name="layer"
                aria-label={l.name}
                checked={layer === l.name}
                onChange={() => setLayer(l.name)}
                className="appearance-none w-[9px] h-[9px] rounded-full border border-[#888] border-r-[#dedbcc] border-b-[#dedbcc] bg-white checked:bg-[radial-gradient(circle,#000_30%,#fff_40%)]"
              />
            ))}
          </div>
        </div>
        <button className="self-center pl-[3px]">?</button>
      </div>
      <div className="w-[36px] flex items-center justify-center border-r border-[#b8b4a4]">
        <button aria-label="Rubber band" className="w-[21px] h-5 bg-[#808080]">
          <svg width="21" height="20" fill="none">
            <path d="M0 5h7l6 8" stroke="#fff" strokeWidth="5" /><circle cx="14" cy="13" r="4.500" fill="#fff" />
            <path d="M0 5h7l6 8" stroke="#000" strokeWidth="3" /><circle cx="14" cy="13" r="2.500" fill="#888" stroke="#000" strokeWidth="2" />
          </svg>
        </button>
      </div>
    </footer>
  );
};

/* ---------- window ---------- */

const MENU = ['Fájl', 'Szerkesztés', 'Munkalap', 'Funkciók', 'Opciók', 'Regisztráció', '?'];
const ACCESS = { 'Funkciók': 1 };

const CaptionButton = ({ label, close, d }) => (
  <button
    aria-label={label}
    className={clsx('w-4 h-4 flex items-center justify-center rounded-[3px] border border-[#c8d8ff]', close ? 'bg-[#e05030]' : 'bg-[#3868e0]')}
  >
    <svg width="12" height="12" fill="none" stroke="#fff" strokeWidth={close ? 2 : 1.2}><path d={d} /></svg>
  </button>
);

const App = () => {
  const [tool, setTool] = useState('Alaphelyzet');

  return (
    <div className="min-h-screen flex flex-col bg-[#ece9d8] text-black font-['Liberation_Sans',Arial,sans-serif] overflow-hidden">
      <header className="flex items-center h-5 pr-[2px] bg-linear-to-b from-[#0a5ae8] via-[#0458f0] to-[#0450d8]">
        <svg width="16" height="16" stroke="#203058" fill="#7088a8"><path d="M6 2h4v4H6zM2 9h5v4H2z" /><path d="M8 6v7h4M2 6h3" /></svg>
        <h1 className="flex-1 font-[Roboto,sans-serif] text-[11px] leading-5 font-bold text-white whitespace-pre">{'Sprint-Layout 5.0 Hun     - [D:\\   Light elektronika\\Laser\\X Y scanner\\Bence\\DAC.lay]'}</h1>
        <div className="flex gap-[2px]">
          <CaptionButton label="Minimize" d="M2 9h5" />
          <CaptionButton label="Restore" d="M4 4V2h6v5H8M2 5h5v5H2z" />
          <CaptionButton label="Close" close d="M2 2l8 8M10 2l-8 8" />
        </div>
      </header>

      <nav className="flex items-center gap-[5px] h-4 pl-[3px] text-[9px] leading-3 border-b border-[#b8b4a4]">
        {MENU.map((item) => {
          const i = ACCESS[item] ?? 0;
          return <button key={item}>{item.slice(0, i)}<u>{item[i]}</u>{item.slice(i + 1)}</button>;
        })}
      </nav>

      <div className="flex items-center h-6 border-b border-[#b8b4a4]">
        {TOOLBAR.map((group, g) => (
          <div key={g} className="flex items-center">
            {g > 0 && <span className="w-px h-[17px] mx-[2px] bg-[#b8b4a4] border-r border-white box-content" />}
            {group.map(([label, Icon, arrow]) => (
              <div key={label} className="flex items-center">
                <button aria-label={label} className="w-[21px] h-5 flex items-center justify-center"><Icon /></button>
                {arrow && (
                  <button aria-label="Rotate options" className="w-[13px] flex justify-center">
                    <svg width="5" height="3"><path d="M0 0h5L2.500 3z" /></svg>
                  </button>
                )}
              </div>
            ))}
          </div>
        ))}
      </div>

      <div className="flex-1 flex">
        <Sidebar tool={tool} setTool={setTool} />
        <Editor />
        <Properties />
        <div className="w-[6px] shrink-0 px-px"><div className="h-full border-x border-dotted border-[#aaa68f]" /></div>
        <Makros />
      </div>

      <StatusBar />
      <div className="h-1 bg-[#4880c0]" />
    </div>
  );
};

export default App;
